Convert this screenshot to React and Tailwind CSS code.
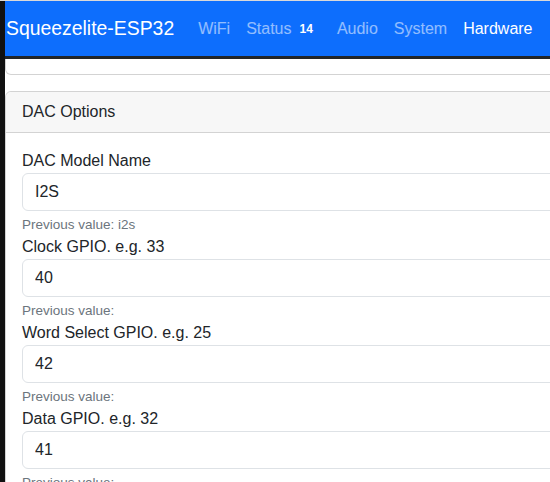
import React from "react";

const navLinks = [
  { label: "WiFi" },
  { label: "Status", badge: "14" },
  { label: "Audio" },
  { label: "System" },
  { label: "Hardware", active: true },
];

const fields = [
  { label: "DAC Model Name", value: "I2S", previous: "Previous value: i2s" },
  { label: "Clock GPIO. e.g. 33", value: "40", previous: "Previous value:" },
  { label: "Word Select GPIO. e.g. 25", value: "42", previous: "Previous value:" },
  { label: "Data GPIO. e.g. 32", value: "41", previous: "Previous value:" },
];

const Field = ({ label, value, previous }) => (
  <div>
    <label className="block text-[16px] leading-6 text-[#212529]">{label}</label>
    <input
      readOnly
      value={value}
      className="block w-full h-[38px] px-3 text-[16px] text-[#212529] bg-white border border-[#dee2e6] rounded-md outline-none"
    />
    <div className="mt-1 text-[13.5px] leading-5 text-[#6c757d]">{previous}</div>
  </div>
);

export default function App() {
  return (
    <div
      className="w-[550px] h-[482px] overflow-hidden flex bg-white border-t border-[#d9d9d9]"
      style={{ fontFamily: '"Liberation Sans", Arial, sans-serif' }}
    >
      {/* window edge */}
      <div className="w-[5px] shrink-0 bg-[#111111]" />

      <div className="flex-1 min-w-0">
        {/* Navbar */}
        <nav className="h-[55px] w-[700px] bg-[#0d6efd] flex items-center border-b-[3px] border-[#212529] box-content">
          <span className="ml-px mr-4 text-[19.4px] text-white whitespace-nowrap">Squeezelite-ESP32</span>
          {navLinks.map((link) => (
            <span
              key={link.label}
              className={`flex items-center px-2 text-[16px] whitespace-nowrap ${
                link.active ? "text-white" : "text-white/55"
              }`}
            >
              {link.label}
              {link.badge && (
                <span className="px-2 text-[12px] font-bold text-white">{link.badge}</span>
              )}
            </span>
          ))}
        </nav>

        {/* Previous card (scrolled out) */}
        <div className="w-[700px] h-[16px] border-x border-b border-[#d3d3d3] rounded-b-md" />

        {/* DAC Options card */}
        <div className="mt-4 w-[700px] border border-[#d3d3d3] rounded-md">
          <div className="px-4 py-2 leading-6 text-[16px] text-[#212529] bg-[#f7f7f7] border-b border-[#d3d3d3] rounded-t-md">
            DAC Options
          </div>
          <div className="p-4 flex flex-col">
            {fields.map((f) => (
              <Field key={f.label} {...f} />
            ))}
          </div>
        </div>
      </div>
    </div>
  );
}
